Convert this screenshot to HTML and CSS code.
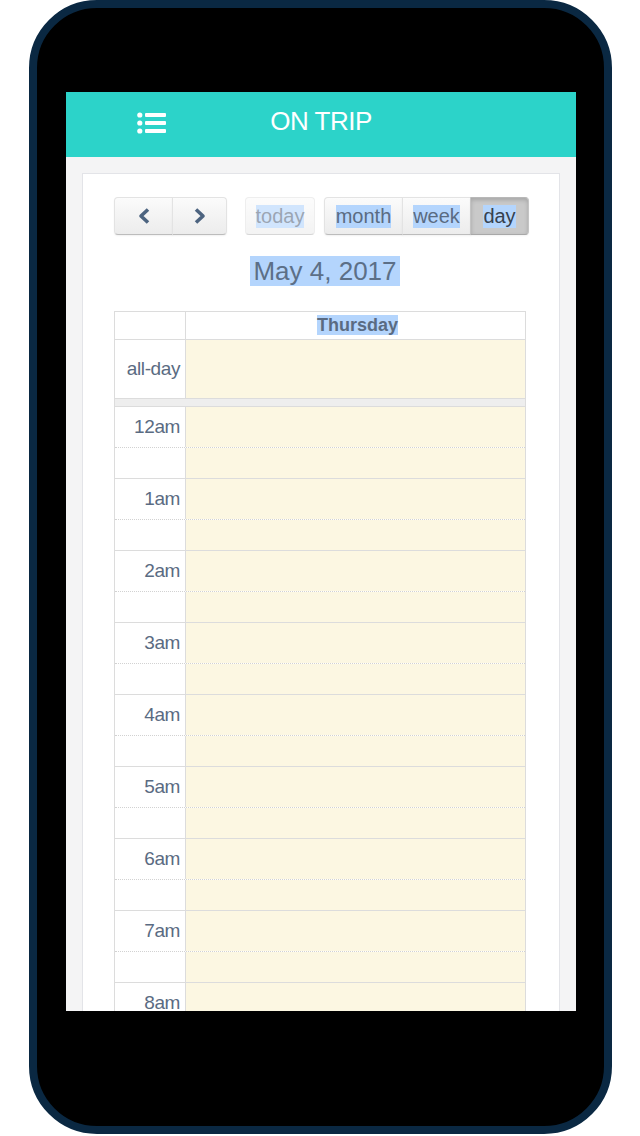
FILE: index.html
```html
<!DOCTYPE html>
<html>
<head>
<meta charset="utf-8">
<link rel="stylesheet" href="styles.css">
</head>
<body>
<div class="phone">
  <div class="screen">
    <header class="appbar">
      <div class="menu">
        <svg width="30" height="22" viewBox="0 0 30 22">
          <circle cx="2.8" cy="3" r="2.6" fill="#fff"/>
          <circle cx="2.8" cy="11" r="2.6" fill="#fff"/>
          <circle cx="2.8" cy="19" r="2.6" fill="#fff"/>
          <rect x="8" y="1" width="21" height="4" rx="1" fill="#fff"/>
          <rect x="8" y="9" width="21" height="4" rx="1" fill="#fff"/>
          <rect x="8" y="17" width="21" height="4" rx="1" fill="#fff"/>
        </svg>
      </div>
      <div class="apptitle">ON TRIP</div>
      <div></div>
    </header>
    <main class="content">
      <section class="card">
        <div class="toolbar">
          <div class="btn-group">
            <button class="btn btn-prev"><svg width="14" height="18" viewBox="0 0 14 18"><path d="M11 2.5 L4 9 L11 15.5" fill="none" stroke="#4d6480" stroke-width="3.6" stroke-linejoin="round"/></svg></button>
            <button class="btn btn-next"><svg width="14" height="18" viewBox="0 0 14 18"><path d="M3 2.5 L10 9 L3 15.5" fill="none" stroke="#4d6480" stroke-width="3.6" stroke-linejoin="round"/></svg></button>
          </div>
          <button class="btn btn-today" disabled><span class="sel">today</span></button>
          <div class="btn-group views">
            <button class="btn btn-month"><span class="sel">month</span></button>
            <button class="btn btn-week"><span class="sel">week</span></button>
            <button class="btn btn-day active"><span class="sel">day</span></button>
          </div>
        </div>
        <h2 class="cal-title"><span class="sel">May 4, 2017</span></h2>
        <div class="grid">
          <div class="row head">
            <div class="axis"></div>
            <div class="day"><span class="sel">Thursday</span></div>
          </div>
          <div class="row allday">
            <div class="axis">all-day</div>
            <div class="day"></div>
          </div>
          <div class="divider"></div>
          <div class="row slot major"><div class="axis">12am</div><div class="day"></div></div>
          <div class="row slot minor"><div class="axis"></div><div class="day"></div></div>
          <div class="row slot major"><div class="axis">1am</div><div class="day"></div></div>
          <div class="row slot minor"><div class="axis"></div><div class="day"></div></div>
          <div class="row slot major"><div class="axis">2am</div><div class="day"></div></div>
          <div class="row slot minor"><div class="axis"></div><div class="day"></div></div>
          <div class="row slot major"><div class="axis">3am</div><div class="day"></div></div>
          <div class="row slot minor"><div class="axis"></div><div class="day"></div></div>
          <div class="row slot major"><div class="axis">4am</div><div class="day"></div></div>
          <div class="row slot minor"><div class="axis"></div><div class="day"></div></div>
          <div class="row slot major"><div class="axis">5am</div><div class="day"></div></div>
          <div class="row slot minor"><div class="axis"></div><div class="day"></div></div>
          <div class="row slot major"><div class="axis">6am</div><div class="day"></div></div>
          <div class="row slot minor"><div class="axis"></div><div class="day"></div></div>
          <div class="row slot major"><div class="axis">7am</div><div class="day"></div></div>
          <div class="row slot minor"><div class="axis"></div><div class="day"></div></div>
          <div class="row slot major"><div class="axis">8am</div><div class="day"></div></div>
          <div class="row slot minor"><div class="axis"></div><div class="day"></div></div>
        </div>
      </section>
    </main>
  </div>
</div>
</body>
</html>
```
FILE: styles.css
```css
html, body {
  margin: 0;
  padding: 0;
  background: #fff;
}
body {
  width: 640px;
  height: 1136px;
  overflow: hidden;
  font-family: "Liberation Sans", Arial, sans-serif;
}
.phone {
  box-sizing: border-box;
  width: 583px;
  height: 1134px;
  margin-left: 29px;
  border: 8px solid #0a2842;
  border-radius: 68px;
  background: #000;
  padding: 84px 0 0 29px;
}
.screen {
  width: 510px;
  height: 919px;
  overflow: hidden;
  background: #f4f4f5;
  display: flex;
  flex-direction: column;
}
.appbar {
  flex: 0 0 65px;
  height: 65px;
  background: #2cd3c9;
  display: grid;
  grid-template-columns: 1fr auto 1fr;
  align-items: center;
}
.menu {
  padding-left: 71px;
  display: flex;
  align-items: center;
  height: 22px;
  margin-top: -4px;
}
.menu svg { display: block; }
.apptitle {
  color: #fff;
  font-size: 26px;
  letter-spacing: -0.5px;
  margin-top: -6px;
}
.content {
  flex: 1;
  padding: 16px 16px 0 16px;
  display: flex;
  flex-direction: column;
  min-height: 0;
}
.card {
  flex: 1;
  background: #fff;
  border: 1px solid #e3e4e8;
  border-bottom: none;
  padding: 23px 33px 0 31px;
}
.toolbar {
  display: flex;
  height: 38px;
}
.btn-group {
  display: flex;
  flex-shrink: 0;
}
.btn {
  box-sizing: border-box;
  flex-shrink: 0;
  height: 38px;
  margin: 0;
  padding: 0;
  border: 1px solid;
  border-color: #e3e3e3 #e3e3e3 #bcbcbc;
  border-radius: 4px;
  background: linear-gradient(#fbfbfb, #ececec);
  box-shadow: inset 0 1px 0 rgba(255,255,255,.3), 0 1px 2px rgba(0,0,0,.06);
  font-family: "Liberation Sans", Arial, sans-serif;
  font-size: 20px;
  color: #5a6b82;
  display: flex;
  align-items: center;
  justify-content: center;
}
.btn svg { display: block; }
.btn-group .btn + .btn { margin-left: -1px; }
.btn-group .btn:not(:first-child) { border-top-left-radius: 0; border-bottom-left-radius: 0; }
.btn-group .btn:not(:last-child) { border-top-right-radius: 0; border-bottom-right-radius: 0; }
.btn-prev { width: 59px; }
.btn-next { width: 55px; }
.btn-today {
  width: 70px;
  margin-left: 18px;
  opacity: .6;
  box-shadow: none;
}
.views { margin-left: 9px; }
.btn-month { width: 79px; }
.btn-week { width: 69px; }
.btn-day { width: 59px; }
.btn.active {
  background: #c9c9c9;
  border-color: #b8b8b8 #c4c4c4 #a8a8a8;
  box-shadow: inset 0 2px 4px rgba(0,0,0,.18), 0 1px 2px rgba(0,0,0,.05);
  color: #36414f;
}
.sel {
  background: #b4d5fd;
}
.cal-title {
  margin: 21px 0 0 0;
  padding-left: 10px;
  text-align: center;
  font-size: 26px;
  font-weight: normal;
  line-height: 30px;
  color: #5c6f87;
}
.cal-title .sel { padding: 0 3px; }
.grid {
  box-sizing: border-box;
  margin-top: 25px;
  width: 412px;
  border: 1px solid #dcdcdc;
  border-bottom: none;
  color: #5a6b82;
  font-size: 19px;
}
.row {
  box-sizing: border-box;
  display: grid;
  grid-template-columns: 71px 1fr;
}
.axis {
  border-right: 1px solid #dcdcdc;
  background: #fff;
  text-align: right;
  padding-right: 5px;
  line-height: 24px;
  letter-spacing: -0.4px;
}
.day { background: #fcf7e2; }
.head {
  height: 28px;
  border-bottom: 1px solid #dcdcdc;
}
.head .day {
  background: #fff;
  text-align: center;
  font-size: 18px;
  font-weight: bold;
  line-height: 27px;
  padding-left: 4px;
}
.allday {
  height: 59px;
  border-bottom: 1px solid #dcdcdc;
}
.allday .axis {
  display: flex;
  align-items: center;
  justify-content: flex-end;
}
.divider {
  box-sizing: border-box;
  height: 8px;
  background: #eeeeee;
  border-bottom: 1px solid #dcdcdc;
}
.slot.major {
  height: 41px;
  border-bottom: 1px dotted #d2d2d2;
}
.slot.major .axis { padding-top: 8px; }
.slot.minor {
  height: 31px;
  border-bottom: 1px solid #dcdcdc;
}
```
